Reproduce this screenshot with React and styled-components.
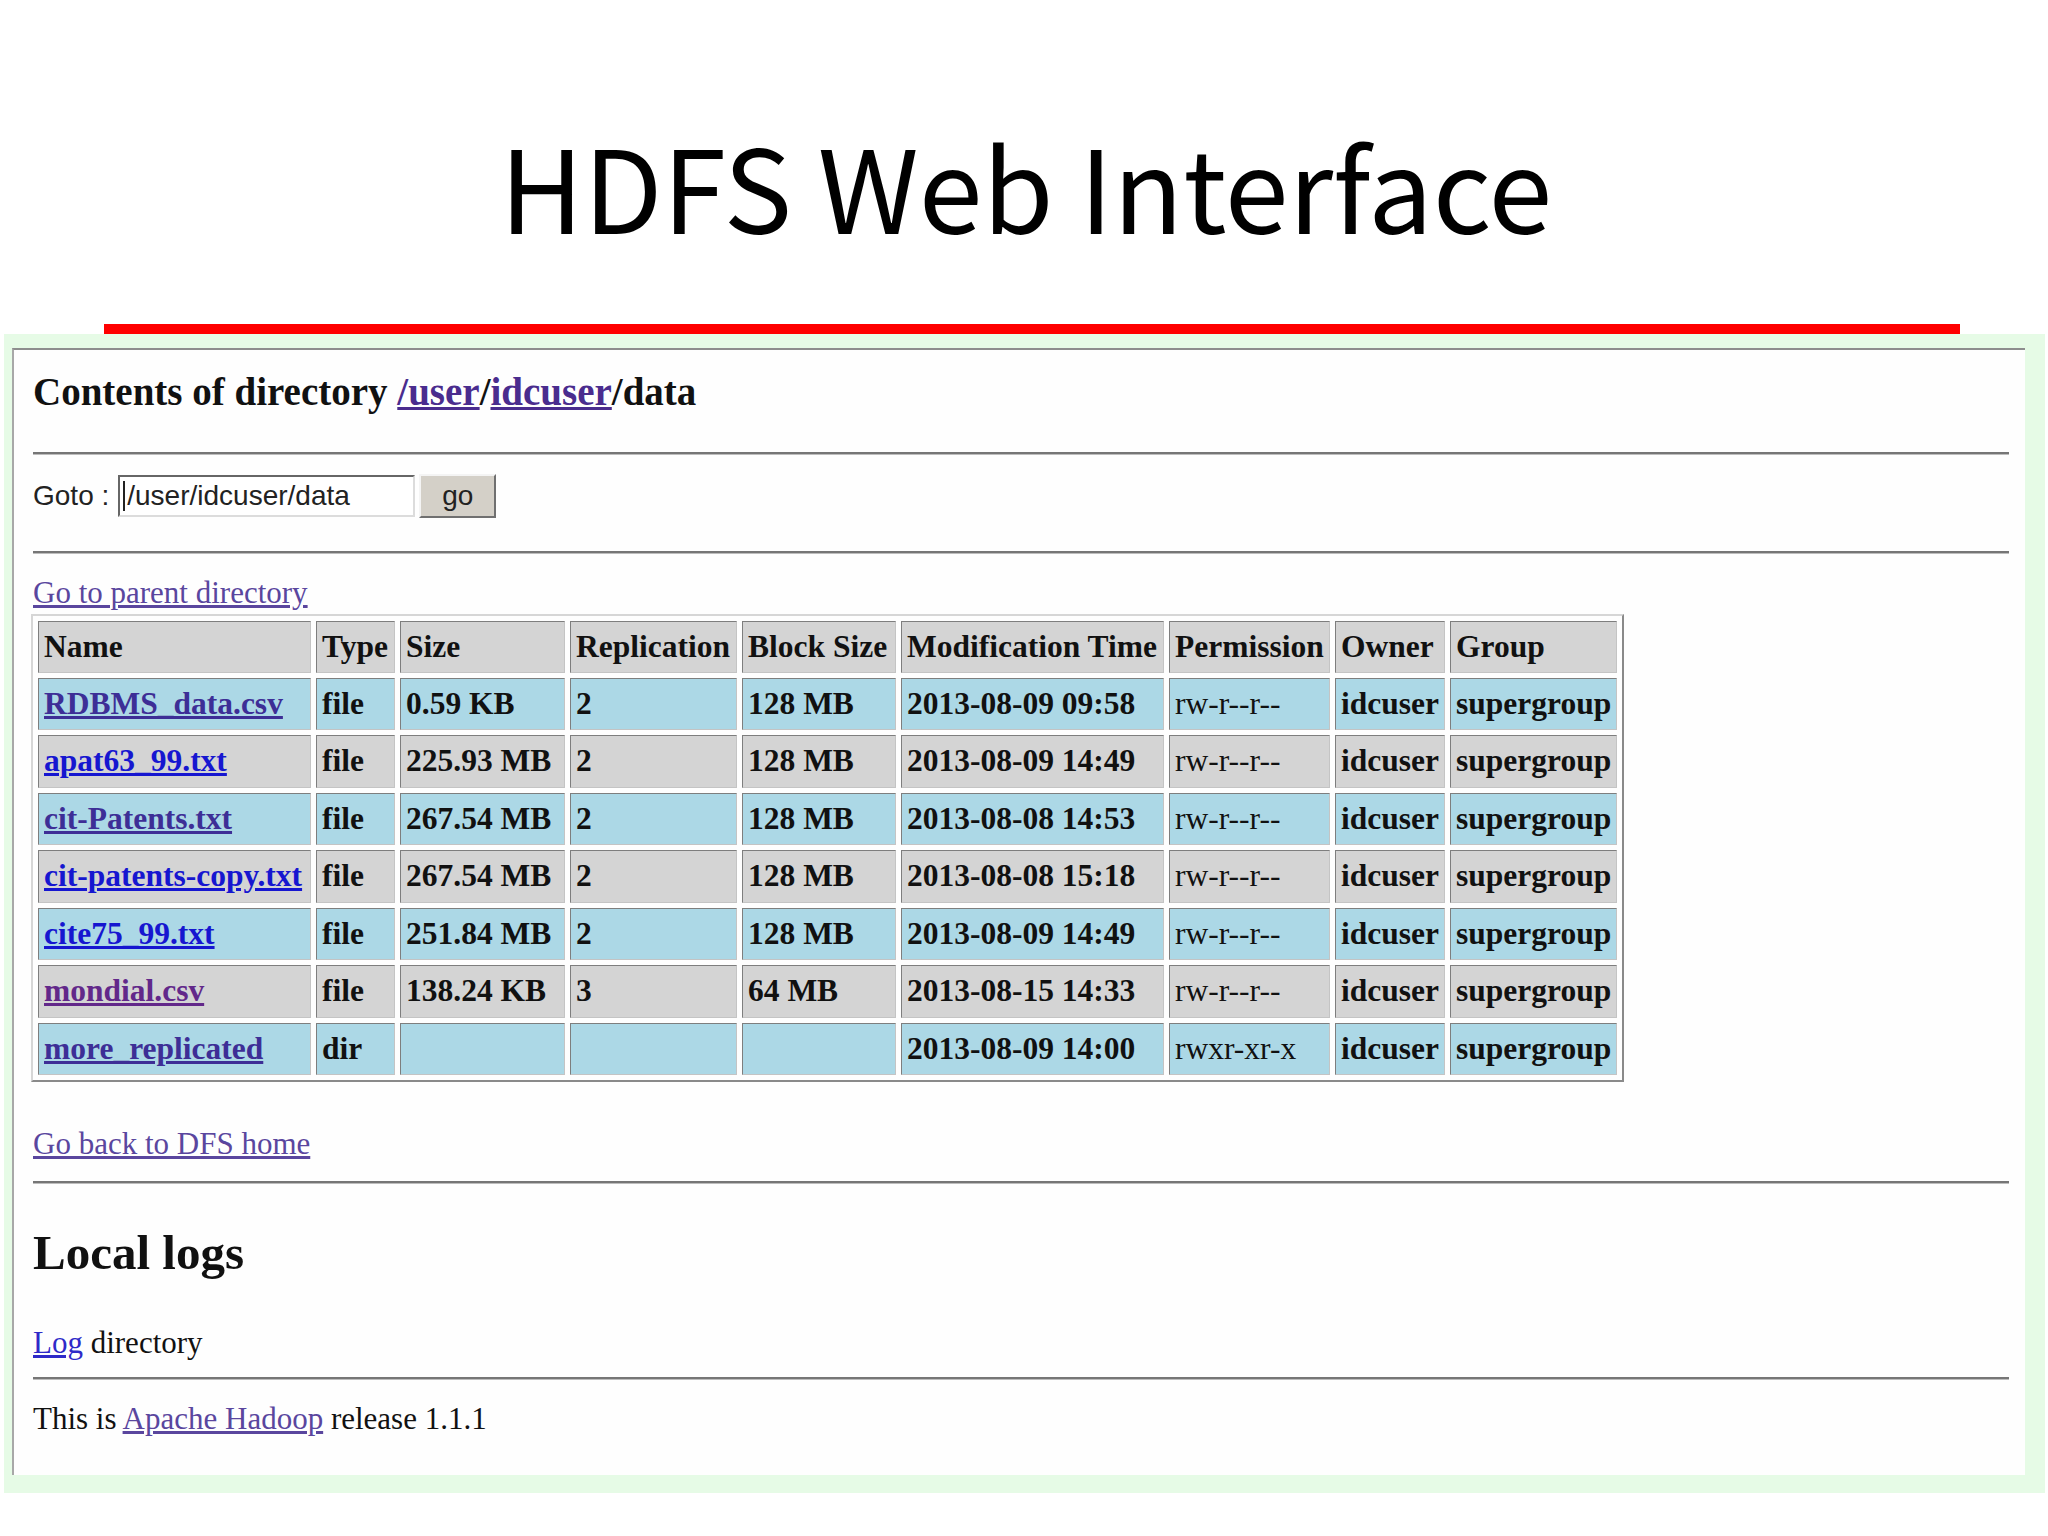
import React from "react";
import styled, { createGlobalStyle } from "styled-components";

const files = [
  { name: "RDBMS_data.csv", visited: true, type: "file", size: "0.59 KB", rep: "2", block: "128 MB", time: "2013-08-09 09:58", perm: "rw-r--r--" },
  { name: "apat63_99.txt", visited: false, type: "file", size: "225.93 MB", rep: "2", block: "128 MB", time: "2013-08-09 14:49", perm: "rw-r--r--" },
  { name: "cit-Patents.txt", visited: true, type: "file", size: "267.54 MB", rep: "2", block: "128 MB", time: "2013-08-08 14:53", perm: "rw-r--r--" },
  { name: "cit-patents-copy.txt", visited: false, type: "file", size: "267.54 MB", rep: "2", block: "128 MB", time: "2013-08-08 15:18", perm: "rw-r--r--" },
  { name: "cite75_99.txt", visited: false, type: "file", size: "251.84 MB", rep: "2", block: "128 MB", time: "2013-08-09 14:49", perm: "rw-r--r--" },
  { name: "mondial.csv", visited: true, type: "file", size: "138.24 KB", rep: "3", block: "64 MB", time: "2013-08-15 14:33", perm: "rw-r--r--" },
  { name: "more_replicated", visited: true, type: "dir", size: "", rep: "", block: "", time: "2013-08-09 14:00", perm: "rwxr-xr-x" },
];

const columns = [
  { label: "Name", width: 273 },
  { label: "Type", width: 79 },
  { label: "Size", width: 165 },
  { label: "Replication", width: 167 },
  { label: "Block Size", width: 154 },
  { label: "Modification Time", width: 263 },
  { label: "Permission", width: 161 },
  { label: "Owner", width: 110 },
  { label: "Group", width: 167 },
];

const GlobalStyle = createGlobalStyle`
  html, body {
    margin: 0;
    padding: 0;
    background: #ffffff;
  }
`;

const Slide = styled.div`
  width: 2048px;
  height: 1536px;
  box-sizing: border-box;
  padding-top: 127px;
  overflow: hidden;
  background: #ffffff;
`;

const Title = styled.h1`
  margin: 0;
  padding-left: 4px;
  text-align: center;
  font-family: "Noto Sans CJK KR", "Noto Sans", sans-serif;
  font-weight: 400;
  font-size: 115px;
  line-height: 115px;
  color: #000;
`;

const RedRule = styled.div`
  margin: 82px 0 0 104px;
  width: 1856px;
  height: 10px;
  background: #ff0000;
`;

const Frame = styled.div`
  margin-left: 4px;
  width: 2041px;
  height: 1159px;
  box-sizing: border-box;
  padding: 14px 20px 18px 8px;
  background: #e6fbe6;
`;

const Page = styled.div`
  height: 100%;
  box-sizing: border-box;
  padding: 0 16px 0 19px;
  background: #fefefe;
  border-top: 2px solid #8d8d8d;
  border-left: 2px solid #a8a8a8;
  font-family: "Liberation Serif", "Times New Roman", serif;
  font-size: 31px;
  line-height: 36px;
  color: #111;
`;

const Heading = styled.div`
  margin-top: ${(p) => p.$top}px;
  font-size: ${(p) => p.$size}px;
  line-height: ${(p) => p.$line}px;
  font-weight: bold;
  color: #111;
`;

const Rule = styled.hr`
  margin: ${(p) => p.$top}px 0 0;
  height: 2px;
  border: 0;
  border-bottom: 1px solid #bdbdbd;
  background: #767676;
`;

const Link = styled.a`
  color: ${(p) => p.$color || "#4a2c8e"};
  text-decoration: underline;
  cursor: pointer;
`;

const Line = styled.div`
  margin-top: ${(p) => p.$top}px;
`;

const GotoRow = styled.div`
  margin-top: 19px;
  height: 44px;
  display: flex;
  align-items: center;
  font-family: "Liberation Sans", Arial, sans-serif;
  font-size: 28px;
  color: #222;
`;

const GotoLabel = styled.span`
  margin-right: 9px;
`;

const InputBox = styled.div`
  width: 297px;
  height: 42px;
  box-sizing: border-box;
  display: flex;
  align-items: center;
  padding-left: 3px;
  background: #fff;
  border: 2px solid;
  border-color: #666 #dcdcdc #dcdcdc #666;

  &::before {
    content: "";
    width: 2px;
    height: 30px;
    margin-right: 2px;
    background: #222;
  }
`;

const GoButton = styled.button`
  margin-left: 4px;
  width: 77px;
  height: 44px;
  padding: 0;
  background: #d4d0c8;
  border: 2px solid;
  border-color: #f4f4f4 #707070 #707070 #f4f4f4;
  font-family: "Liberation Sans", Arial, sans-serif;
  font-size: 28px;
  color: #222;
`;

const Table = styled.table`
  margin: 3px 0 0 -2px;
  width: 1593px;
  table-layout: fixed;
  border-collapse: separate;
  border-spacing: 5px;
  border: 2px solid;
  border-color: #d6d6d6 #8a8a8a #8a8a8a #d6d6d6;
  font-size: 31.5px;
  line-height: 36px;
  font-weight: bold;
`;

const Cell = styled.td`
  box-sizing: border-box;
  height: ${(p) => (p.$head ? 52 : 52.5)}px;
  padding: 0 5px;
  text-align: left;
  vertical-align: middle;
  white-space: nowrap;
  overflow: hidden;
  font-weight: ${(p) => (p.$light ? "normal" : "bold")};
  background: ${(p) => (p.$blue ? "#acd8e6" : "#d4d4d4")};
  border: 1px solid;
  border-color: #7e7e7e #c4c4c4 #c4c4c4 #7e7e7e;
  color: #111;
`;

const HeadCell = styled(Cell).attrs({ as: "th" })``;

export default function App() {
  return (
    <>
      <GlobalStyle />
      <Slide>
        <Title>HDFS Web Interface</Title>
        <RedRule />
        <Frame>
          <Page>
            <Heading $top={20} $size={39} $line={44}>
              Contents of directory <Link>/user</Link>/<Link>idcuser</Link>/data
            </Heading>
            <Rule $top={38} />
            <GotoRow>
              <GotoLabel>Goto :</GotoLabel>
              <InputBox>/user/idcuser/data</InputBox>
              <GoButton>go</GoButton>
            </GotoRow>
            <Rule $top={33} />
            <Line $top={20.5}>
              <Link $color="#5a469e">Go to parent directory</Link>
            </Line>
            <Table>
              <thead>
                <tr>
                  {columns.map((c) => (
                    <HeadCell key={c.label} $head style={{ width: c.width }}>
                      {c.label}
                    </HeadCell>
                  ))}
                </tr>
              </thead>
              <tbody>
                {files.map((f, i) => {
                  const blue = i % 2 === 0;
                  return (
                    <tr key={f.name}>
                      <Cell $blue={blue}>
                        <Link $color={f.visited ? (f.name === "mondial.csv" ? "#62288a" : "#3d2e96") : "#1616d0"}>
                          {f.name}
                        </Link>
                      </Cell>
                      <Cell $blue={blue}>{f.type}</Cell>
                      <Cell $blue={blue}>{f.size}</Cell>
                      <Cell $blue={blue}>{f.rep}</Cell>
                      <Cell $blue={blue}>{f.block}</Cell>
                      <Cell $blue={blue}>{f.time}</Cell>
                      <Cell $blue={blue} $light>{f.perm}</Cell>
                      <Cell $blue={blue}>idcuser</Cell>
                      <Cell $blue={blue}>supergroup</Cell>
                    </tr>
                  );
                })}
              </tbody>
            </Table>
            <Line $top={44}>
              <Link $color="#5a469e">Go back to DFS home</Link>
            </Line>
            <Rule $top={18.5} />
            <Heading $top={41} $size={49} $line={56}>
              Local logs
            </Heading>
            <Line $top={44}>
              <Link $color="#2e2ac8">Log</Link> directory
            </Line>
            <Rule $top={16.5} />
            <Line $top={20.5}>
              This is <Link $color="#5a469e">Apache Hadoop</Link> release 1.1.1
            </Line>
          </Page>
        </Frame>
      </Slide>
    </>
  );
}
